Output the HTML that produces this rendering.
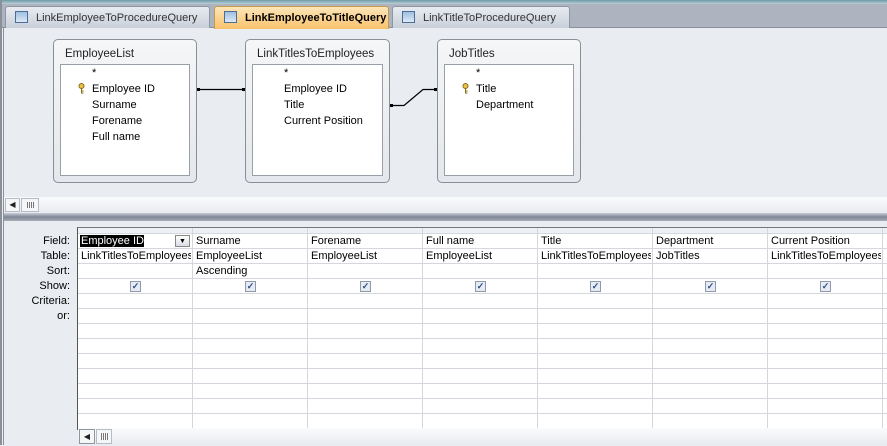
<!DOCTYPE html>
<html><head><style>
*{margin:0;padding:0;box-sizing:border-box}
body{width:887px;height:445px;overflow:hidden;position:relative;background:#e9edf2;font-family:"Liberation Sans",sans-serif;font-size:11px;color:#000}
.a{position:absolute}
.tab{position:absolute;top:6px;height:22px;border:1px solid #8d96a3;border-bottom:none;border-radius:3px 3px 0 0;background:linear-gradient(#e8ecf1,#c9d0da);color:#333;padding:5px 0 0 30px;white-space:nowrap}
.ic{position:absolute;left:9px;top:4px;width:13px;height:12px;border:1px solid #4a6e96;background:linear-gradient(#9fc0e0,#dce9f5)}
.box{position:absolute;border:1px solid #8a8f96;border-radius:5px;background:linear-gradient(#f5f6f8,#e4e7eb)}
.box .t{position:absolute;left:11px;top:8px;color:#222;font-size:11.5px}
.box .in{position:absolute;left:6px;right:6px;top:24px;bottom:6px;background:#fff;border:1px solid #9aa0a8}
.f{position:absolute;font-size:11px}
.key{position:absolute}
.cell{position:absolute;left:4px;font-size:11px;white-space:nowrap;overflow:hidden;width:110px}
.cb{position:absolute;left:52px;top:281px;width:11px;height:11px;border:1px solid #8e9aab;background:#e6ebf2;color:#2b4d8a;font-size:9px;line-height:9px;text-align:center;font-weight:bold}
.lbl{position:absolute;right:817px;font-size:11px;text-align:right}
.grip{position:absolute;border:1px solid #b5bcc6;background:#f4f6f8}
</style></head><body>
<div class="a" style="left:0;top:0;width:887px;height:4px;background:linear-gradient(#6f9aa8,#b9cfd6)"></div>
<div class="a" style="left:0;top:4px;width:887px;height:24px;background:#adb4c0;border-bottom:1px solid #8a9099"></div>
<div class="tab" style="left:5px;width:205px"><span class="ic"></span>LinkEmployeeToProcedureQuery</div>
<div class="tab" style="left:214px;width:175px;background:linear-gradient(#fde6b8,#f9c26c);color:#000;font-weight:bold;border-color:#c49a4c;height:23px"><span class="ic"></span>LinkEmployeeToTitleQuery</div>
<div class="tab" style="left:392px;width:178px"><span class="ic"></span>LinkTitleToProcedureQuery</div>
<div class="a" style="left:0;top:0;width:2px;height:445px;background:#8a8f98"></div>
<div class="a" style="left:3px;top:28px;width:1px;height:417px;background:#8a8f98"></div>

<div class="box" style="left:53px;top:39px;width:144px;height:144px"><div class="t">EmployeeList</div><div class="in"></div></div>
<div class="box" style="left:245px;top:39px;width:145px;height:144px"><div class="t">LinkTitlesToEmployees</div><div class="in"></div></div>
<div class="box" style="left:437px;top:39px;width:144px;height:144px"><div class="t">JobTitles</div><div class="in"></div></div>

<div class="f" style="left:92px;top:67px">*</div>
<svg class="key" style="left:78px;top:83px" width="7" height="11"><circle cx="3.5" cy="3" r="2.5" fill="#e8c24a" stroke="#8a6a10"/><path d="M3.5 5.5V10.5M3.5 8H5.5M3.5 10H5.5" stroke="#8a6a10"/></svg>
<div class="f" style="left:92px;top:83px">Employee ID</div>
<div class="f" style="left:92px;top:99px">Surname</div>
<div class="f" style="left:92px;top:115px">Forename</div>
<div class="f" style="left:92px;top:131px">Full name</div>

<div class="f" style="left:284px;top:67px">*</div>
<div class="f" style="left:284px;top:83px">Employee ID</div>
<div class="f" style="left:284px;top:99px">Title</div>
<div class="f" style="left:284px;top:115px">Current Position</div>

<div class="f" style="left:476px;top:67px">*</div>
<svg class="key" style="left:462px;top:83px" width="7" height="11"><circle cx="3.5" cy="3" r="2.5" fill="#e8c24a" stroke="#8a6a10"/><path d="M3.5 5.5V10.5M3.5 8H5.5M3.5 10H5.5" stroke="#8a6a10"/></svg>
<div class="f" style="left:476px;top:83px">Title</div>
<div class="f" style="left:476px;top:99px">Department</div>

<svg class="a" style="left:0;top:0" width="887" height="200">
<path d="M197 89.5H245M390 105.5H404L423 89.5H437" stroke="#000" stroke-width="1.2" fill="none"/>
<rect x="197" y="88" width="3" height="3"/><rect x="242" y="88" width="3" height="3"/>
<rect x="390" y="104" width="3" height="3"/><rect x="434" y="88" width="3" height="3"/>
</svg>

<div class="a" style="left:4px;top:197px;width:883px;height:16px;background:linear-gradient(#fafbfc,#e8ebef)"></div>
<div class="a" style="left:5px;top:198px;width:15px;height:14px;border:1px solid #b5bcc6;background:#f4f6f8;font-size:8px;text-align:center;line-height:12px;color:#222">&#9664;</div>
<div class="grip" style="left:21px;top:198px;width:18px;height:14px"><svg width="16" height="12"><path d="M5.5 3V9M7.5 3V9M9.5 3V9M11.5 3V9" stroke="#777"/></svg></div>
<div class="a" style="left:4px;top:213px;width:883px;height:8px;background:linear-gradient(#c8cdd6,#7f8795 50%,#a6adb8)"></div>

<div class="a" style="left:77px;top:227px;width:810px;height:203px;background:#fff;border-left:1px solid #555;border-top:1px solid #777"></div>
<div class="a" style="left:78px;top:228px;width:809px;height:5px;background:#edf0f4"></div>
<svg class="a" style="left:78px;top:0" width="809" height="430">
<g stroke="#d4d8de">
<path d="M0 233.5H809M0 248.5H809M0 263.5H809M0 278.5H809M0 293.5H809M0 308.5H809M0 323.5H809M0 338.5H809M0 353.5H809M0 368.5H809M0 383.5H809M0 398.5H809M0 413.5H809"/>
<path d="M114.5 228V428M229.5 228V428M344.5 228V428M459.5 228V428M574.5 228V428M689.5 228V428M804.5 228V428"/>
</g></svg>
<div class="lbl" style="top:235px">Field:</div>
<div class="lbl" style="top:250px">Table:</div>
<div class="lbl" style="top:265px">Sort:</div>
<div class="lbl" style="top:280px">Show:</div>
<div class="lbl" style="top:295px">Criteria:</div>
<div class="lbl" style="top:310px">or:</div>

<div class="a" style="left:80px;top:235px;width:64px;height:12px;background:#000"></div>
<div class="cell" style="left:81px;top:235px;color:#fff">Employee ID</div>
<div class="a" style="left:175px;top:235px;width:15px;height:12px;border:1px solid #888;background:linear-gradient(#fff,#d8dde4);font-size:7px;text-align:center;line-height:12px">&#9660;</div>
<div class="cell" style="left:81px;top:250px;width:110px">LinkTitlesToEmployees</div>
<div class="cb" style="left:130px">&#10003;</div>

<div class="cell" style="left:196px;top:235px">Surname</div>
<div class="cell" style="left:196px;top:250px">EmployeeList</div>
<div class="cell" style="left:196px;top:265px">Ascending</div>
<div class="cb" style="left:245px">&#10003;</div>

<div class="cell" style="left:311px;top:235px">Forename</div>
<div class="cell" style="left:311px;top:250px">EmployeeList</div>
<div class="cb" style="left:360px">&#10003;</div>

<div class="cell" style="left:426px;top:235px">Full name</div>
<div class="cell" style="left:426px;top:250px">EmployeeList</div>
<div class="cb" style="left:475px">&#10003;</div>

<div class="cell" style="left:541px;top:235px">Title</div>
<div class="cell" style="left:541px;top:250px">LinkTitlesToEmployees</div>
<div class="cb" style="left:590px">&#10003;</div>

<div class="cell" style="left:656px;top:235px">Department</div>
<div class="cell" style="left:656px;top:250px">JobTitles</div>
<div class="cb" style="left:705px">&#10003;</div>

<div class="cell" style="left:771px;top:235px">Current Position</div>
<div class="cell" style="left:771px;top:250px">LinkTitlesToEmployees</div>
<div class="cb" style="left:820px">&#10003;</div>

<div class="a" style="left:78px;top:428px;width:809px;height:17px;background:linear-gradient(#fafbfc,#e8ebef)"></div>
<div class="a" style="left:79px;top:429px;width:16px;height:15px;border:1px solid #8e959f;background:#f4f6f8;font-size:8px;text-align:center;line-height:13px;color:#222">&#9664;</div>
<div class="grip" style="left:96px;top:429px;width:16px;height:15px"><svg width="14" height="13"><path d="M4.5 3V10M6.5 3V10M8.5 3V10M10.5 3V10" stroke="#777"/></svg></div>
</body></html>
